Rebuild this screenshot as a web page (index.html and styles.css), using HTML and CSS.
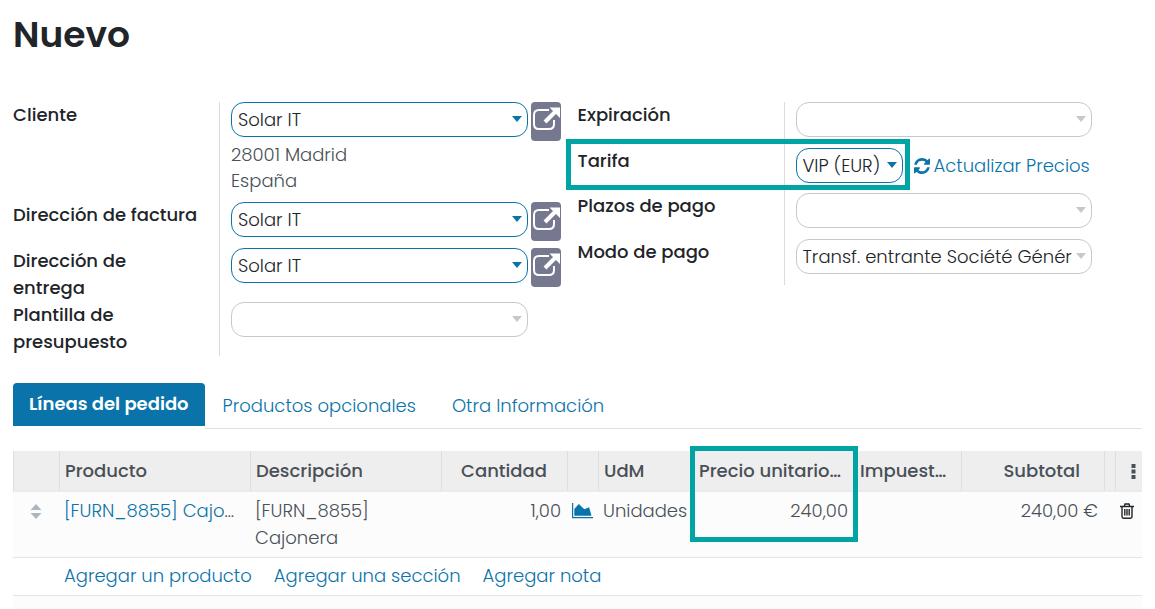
FILE: index.html
```html
<!DOCTYPE html>
<html lang="es">
<head>
<meta charset="utf-8">
<meta name="viewport" content="width=device-width, initial-scale=1">
<title>Nuevo</title>
<link rel="stylesheet" href="styles.css">
</head>
<body>
<svg class="sprite" aria-hidden="true">
  <symbol id="external" viewBox="0 0 30 39">
    <path d="M18 8H8Q3 8 3 13v9q0 5 5 5h10q5 0 5-5v-4" fill="none" stroke="currentColor" stroke-width="2"/>
    <path d="M14 20 25 9" stroke="currentColor" stroke-width="4"/>
    <path d="M18.500 5.500H29V16Z" fill="currentColor"/>
  </symbol>
</svg>
<main class="sheet">
  <h1 class="title">Nuevo</h1>

  <div class="groups">
    <section class="group">
      <div class="row">
        <label class="label" for="cliente">Cliente</label>
        <div class="value">
          <div class="field">
            <span class="picker"><select id="cliente"><option>Solar IT</option></select></span>
            <button class="open" type="button" aria-label="Abrir cliente"><svg><use href="#external"/></svg></button>
          </div>
          <div class="address">28001 Madrid<br>España</div>
        </div>
      </div>
      <div class="row">
        <label class="label" for="factura">Dirección de factura</label>
        <div class="value">
          <div class="field">
            <span class="picker"><select id="factura"><option>Solar IT</option></select></span>
            <button class="open" type="button" aria-label="Abrir dirección de factura"><svg><use href="#external"/></svg></button>
          </div>
        </div>
      </div>
      <div class="row">
        <label class="label" for="entrega">Dirección de entrega</label>
        <div class="value">
          <div class="field">
            <span class="picker"><select id="entrega"><option>Solar IT</option></select></span>
            <button class="open" type="button" aria-label="Abrir dirección de entrega"><svg><use href="#external"/></svg></button>
          </div>
        </div>
      </div>
      <div class="row">
        <label class="label" for="plantilla">Plantilla de presupuesto</label>
        <div class="value">
          <div class="field"><span class="picker optional"><select id="plantilla"><option></option></select></span></div>
        </div>
      </div>
    </section>

    <section class="group">
      <div class="row">
        <label class="label" for="expiracion">Expiración</label>
        <div class="value">
          <div class="field"><span class="picker optional"><input id="expiracion" type="text"></span></div>
        </div>
      </div>
      <div class="row marked">
        <label class="label" for="tarifa">Tarifa</label>
        <div class="value">
          <div class="field wide">
            <span class="picker short"><select id="tarifa"><option>VIP (EUR)</option></select></span>
            <button class="refresh" type="button">
              <svg viewBox="0 0 1536 1536" aria-hidden="true"><path fill="currentColor" d="M1511 928q0 5-1 7-64 268-268 434.500T764 1536q-146 0-282.500-55T238 1324l-129 129q-19 19-45 19t-45-19-19-45V960q0-26 19-45t45-19h448q26 0 45 19t19 45-19 45l-137 137q71 66 161 102t187 36q134 0 250-65t186-179q11-17 53-117 8-23 30-23h192q13 0 22.500 9.500t9.500 22.500zm25-800v448q0 26-19 45t-45 19h-448q-26 0-45-19t-19-45 19-45l138-138Q969 256 768 256q-134 0-250 65T332 500q-11 17-53 117-8 23-30 23H50q-13 0-22.500-9.500T18 608v-7q65-268 270-434.500T768 0q146 0 284 55.500T1297 212l130-129q19-19 45-19t45 19 19 45z"/></svg>
              Actualizar Precios
            </button>
          </div>
        </div>
      </div>
      <div class="row">
        <label class="label" for="plazos">Plazos de pago</label>
        <div class="value">
          <div class="field"><span class="picker optional"><select id="plazos"><option></option></select></span></div>
        </div>
      </div>
      <div class="row">
        <label class="label" for="modo">Modo de pago</label>
        <div class="value">
          <div class="field"><span class="picker optional"><select id="modo"><option>Transf. entrante Société Générale</option></select></span></div>
        </div>
      </div>
    </section>
  </div>

  <nav class="tabs">
    <a class="tab active" href="#lineas">Líneas del pedido</a>
    <a class="tab" href="#opcionales">Productos opcionales</a>
    <a class="tab" href="#otra">Otra Información</a>
  </nav>

  <table class="lines" id="lineas">
    <colgroup>
      <col class="c-handle"><col class="c-text"><col class="c-text"><col class="c-qty"><col class="c-icon"><col class="c-unit"><col class="c-price"><col class="c-tax"><col class="c-total"><col class="c-gap"><col class="c-menu">
    </colgroup>
    <thead>
      <tr>
        <th></th>
        <th>Producto</th>
        <th>Descripción</th>
        <th class="centered">Cantidad</th>
        <th></th>
        <th>UdM</th>
        <th class="price"><div class="clip">Precio unitario del producto</div></th>
        <th class="tax"><div class="clip">Impuestos</div></th>
        <th class="num total">Subtotal</th>
        <th></th>
        <th class="menu"><button class="icon" type="button" aria-label="Columnas opcionales"><svg width="5" height="15" viewBox="0 0 5 15"><path fill="#495057" d="M.5 0h4v4h-4zM.5 5.500h4v4h-4zM.5 11h4v4h-4z"/></svg></button></th>
      </tr>
    </thead>
    <tbody>
      <tr class="item">
        <td class="handle"><svg width="12" height="15" viewBox="0 0 12 15"><path fill="#adb5bd" d="M6 0l5.500 6H.5zM6 15l5.500-6H.5z"/></svg></td>
        <td><div class="clip"><a href="#producto">[FURN_8855] Cajonera</a></div></td>
        <td>[FURN_8855] Cajonera</td>
        <td class="num">1,00</td>
        <td class="chart"><button class="icon" type="button" aria-label="Previsión"><svg width="21" height="16" viewBox="0 0 21 16"><path fill="#0a73aa" d="M0 0h1.200v14H21v1.200H0zM2.300 12.800V6l4.500-5 5.500 5.200 4.800-2 2.400 8.600z"/></svg></button></td>
        <td class="unit">Unidades</td>
        <td class="num amount">240,00</td>
        <td></td>
        <td class="num">240,00 €</td>
        <td></td>
        <td class="menu"><button class="icon" type="button" aria-label="Eliminar"><svg width="14" height="16" viewBox="0 0 14 16"><path fill="none" stroke="#212529" stroke-width="1.400" d="M0 3.500h14M4.200 3.500 5 1h4l.8 2.500M2 3.500v10q0 1.700 1.500 1.700h7q1.500 0 1.500-1.700v-10M4.800 6v6.500M7 6v6.500M9.200 6v6.500"/></svg></button></td>
      </tr>
      <tr class="adders">
        <td></td>
        <td colspan="10"><div class="links"><a href="#producto">Agregar un producto</a><a href="#seccion">Agregar una sección</a><a href="#nota">Agregar nota</a></div></td>
      </tr>
      <tr class="blank"><td colspan="11"></td></tr>
    </tbody>
  </table>
</main>
</body>
</html>
```

FILE: styles.css
```css
*, *::before, *::after { box-sizing: border-box; }

body {
  margin: 0;
  background: #fff;
  color: #212529;
  font: 300 18px/27px Poppins, Inter, sans-serif;
}

a { color: #0a73aa; text-decoration: none; }

button, input, select { font: inherit; color: inherit; }

button { padding: 0; border: 0; background: none; cursor: pointer; }

.sprite { display: none; }

.sheet { padding: 13px 13px 0; }

.title {
  margin: 0 0 45px;
  font-size: 36px;
  line-height: 44px;
  font-weight: 600;
}

.groups { display: grid; grid-template-columns: 1fr 1fr; align-items: start; }

.row {
  position: relative;
  display: grid;
  grid-template-columns: 206px minmax(0, 1fr);
}

.label { margin: -1px 0 1px; padding-right: 20px; font-weight: 500; }

.value {
  min-height: 46px;
  padding: 0 50px 0 11px;
  border-left: 1px solid #d9dbdd;
}

.field { position: relative; display: flex; align-items: center; }

.picker { position: relative; flex: 1; min-width: 0; color: #0a73aa; }

.picker select,
.picker input {
  display: block;
  width: 100%;
  height: 35px;
  padding: 0 19px 1px 6px;
  border: 1px solid currentColor;
  border-radius: 13px;
  background: #fff;
  appearance: none;
}

.picker select { color: #212529; border-color: #0a73aa; }

.picker.optional select { border-color: #c8c8c8; }

.picker.optional { color: #c8c8c8; }

.picker::after {
  content: "";
  position: absolute;
  top: 14px;
  right: 6px;
  border: 5px solid transparent;
  border-top: 6px solid currentColor;
  border-bottom: 0;
}

.picker.short { flex: 0 0 107px; }

.open {
  position: absolute;
  top: 0;
  left: calc(100% + 3px);
  width: 30px;
  height: 39px;
  border-radius: 4px;
  background: #75788e;
  color: #fff;
}

.open svg { display: block; width: 30px; height: 39px; }

.address { margin: 5px 0 8px; line-height: 26px; color: #495057; }

.field.wide { gap: 11px; }

.refresh {
  display: flex;
  align-items: center;
  gap: 4px;
  color: #0a73aa;
  white-space: nowrap;
}

.refresh svg { width: 16px; height: 16px; }

.marked .value { min-height: 45px; }

.marked::after {
  content: "";
  position: absolute;
  z-index: 1;
  top: -9px;
  left: -12px;
  width: 344px;
  height: 51px;
  border: 5px solid #00a5a3;
  pointer-events: none;
}

.tabs {
  display: flex;
  align-items: flex-start;
  margin-top: 27px;
  border-bottom: 1px solid #dee2e6;
}

.tab { padding: 9px 18px; }

.tab.active {
  padding: 7px 16px 9px;
  border-radius: 4px 4px 0 0;
  background: #0a73aa;
  color: #fff;
  font-weight: 600;
  box-shadow: 0 3px #fff;
}

.lines {
  width: 100%;
  margin-top: 22px;
  table-layout: fixed;
  border-collapse: separate;
  border-spacing: 0;
  color: #495057;
}

.c-handle { width: 46px; }
.c-text { width: 191px; }
.c-qty { width: 126px; }
.c-icon { width: 31px; }
.c-unit { width: 94px; }
.c-price { width: 165px; }
.c-tax { width: 104px; }
.c-gap { width: 11px; }
.c-menu { width: 27px; }

.lines th {
  height: 41px;
  padding: 0 6px 1px 5px;
  border-left: 1px solid #dcdee0;
  border-bottom: 2px solid #e9ecef;
  background: #eee;
  font-weight: 500;
  text-align: left;
}

.lines .centered { text-align: center; }

.lines th.price { position: relative; padding-right: 12px; border-left: 0; padding-left: 7px; }

.lines th.tax { padding: 0 12px 1px 2px; border-left-color: #eee; }

.lines th.total { padding-right: 24px; }

.lines th.price::after {
  content: "";
  position: absolute;
  z-index: 1;
  top: -5px;
  left: -2px;
  width: 168px;
  height: 96px;
  border: 5px solid #00a5a3;
  pointer-events: none;
}

.lines td { padding: 5px; vertical-align: top; border-bottom: 1px solid #e4e7ea; }

.item td { padding-bottom: 6px; background: #fcfcfc; }

.adders td { padding: 4px 5px 6px; }

.clip { overflow: hidden; white-space: nowrap; text-overflow: ellipsis; }

.lines .num { text-align: right; }

.lines td.num { padding-right: 6px; }

.lines td.amount { padding-right: 9px; }

.lines td.unit { padding-right: 0; }

.lines .handle,
.lines .menu,
.lines .chart { padding-left: 0; padding-right: 0; text-align: center; }

.lines th.menu { padding-left: 8px; }

.lines td.menu { padding-right: 4px; }

.icon { display: inline-block; }

.icon svg, .handle svg { vertical-align: -2px; }

.links { display: flex; gap: 22px; }

.blank td { height: 14px; padding: 0; border: 0; background: #fcfcfc; }
```
